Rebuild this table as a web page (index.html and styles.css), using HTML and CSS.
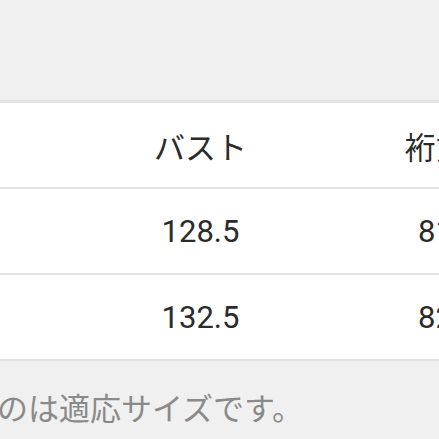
FILE: index.html
```html
<!DOCTYPE html>
<html lang="ja">
<head>
<meta charset="utf-8">
<link rel="stylesheet" href="styles.css">
</head>
<body>
<div class="page">
  <div class="top-space"></div>
  <div class="size-table">
    <div class="row head">
      <div class="cell">バスト</div>
      <div class="cell">裄丈</div>
    </div>
    <div class="row">
      <div class="cell">128.5</div>
      <div class="cell">81</div>
    </div>
    <div class="row">
      <div class="cell">132.5</div>
      <div class="cell">82</div>
    </div>
  </div>
  <div class="note">のは適応サイズです。</div>
</div>
</body>
</html>
```

FILE: styles.css
```css
html, body {
  margin: 0;
  padding: 0;
  background: #f0f0f0;
  overflow: hidden;
}
.page {
  width: 439px;
  height: 439px;
  overflow: hidden;
  font-family: Roboto, "Noto Sans CJK JP", sans-serif;
}
.top-space {
  height: 100px;
}
.size-table {
  background: #ffffff;
  border-top: 3px solid #e4e4e4;
}
.row {
  display: flex;
  height: 84px;
  border-bottom: 2px solid #e2e2e2;
  padding-left: 83px;
  white-space: nowrap;
}
.cell {
  flex: 0 0 235px;
  display: flex;
  align-items: center;
  justify-content: center;
  font-size: 31px;
  color: #2b2b2b;
}
.note {
  margin-left: -3px;
  padding-top: 28px;
  font-size: 31px;
  line-height: 36px;
  color: #8a8a8a;
  font-family: "Noto Sans CJK JP", sans-serif;
  white-space: nowrap;
}
```
